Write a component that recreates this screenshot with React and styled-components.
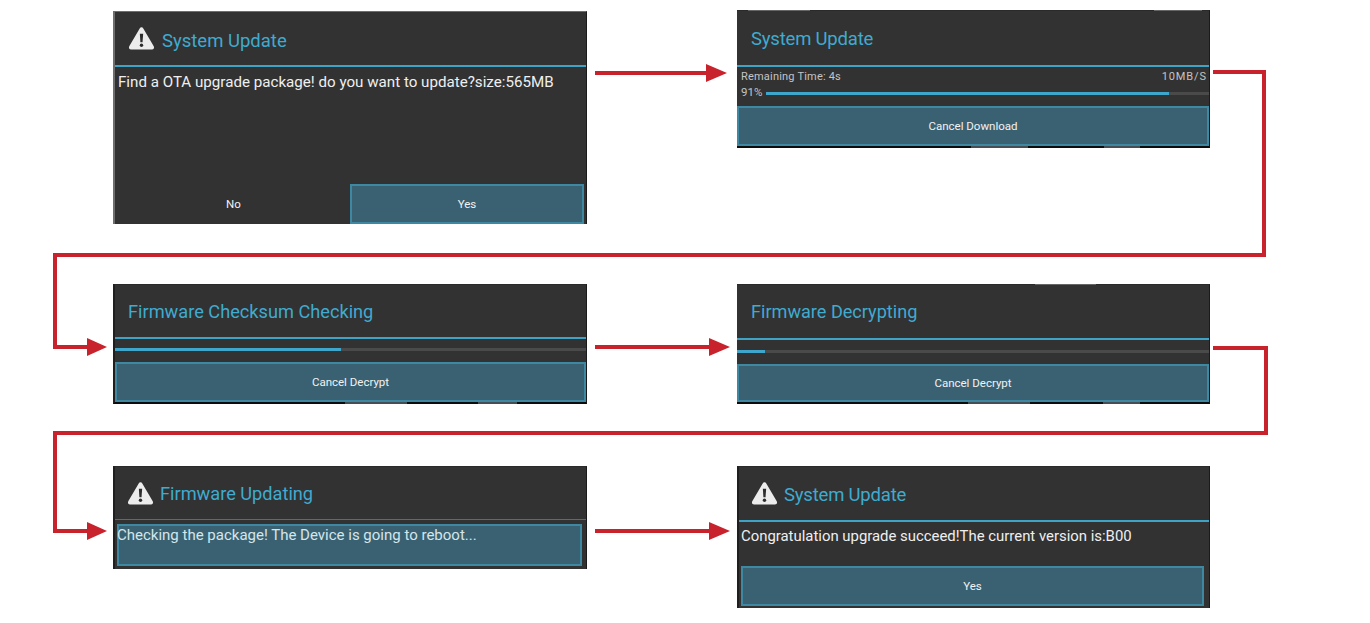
import React from 'react';
import styled, { createGlobalStyle } from 'styled-components';

const GlobalStyle = createGlobalStyle`
  html, body {
    margin: 0;
    background: #fff;
    font-family: Roboto, 'Liberation Sans', sans-serif;
  }
`;

const Page = styled.div`
  position: relative;
  width: 1370px;
  height: 623px;
  overflow: hidden;
  background: #fff;
`;

const Flow = styled.div`
  display: grid;
  grid-template-columns: 474px 473px;
  column-gap: 150px;
  row-gap: 60px;
  padding: 10px 0 0 113px;
  align-items: start;
`;

const Screen = styled.section`
  position: relative;
  display: flex;
  flex-direction: column;
  box-sizing: border-box;
  height: ${(p) => p.$height}px;
  margin-top: ${(p) => p.$top || 0}px;
  background: #323232;
  color: #eee;
  border-left: ${(p) => (p.$flush ? 0 : 2)}px solid ${(p) => p.$edge || '#1f1f1f'};
  border-right: 1px solid #1a1a1a;
  border-top: 1px solid ${(p) => p.$edge || '#2a2a2a'};
  border-bottom: ${(p) => (p.$footer ? '2px solid #0c0c0c' : '0')};
`;

const TitleBar = styled.header`
  display: flex;
  align-items: center;
  gap: ${(p) => p.$gap || 7}px;
  box-sizing: border-box;
  height: ${(p) => p.$height}px;
  padding-left: ${(p) => p.$inset}px;
  border-bottom: ${(p) => p.$rule || 2}px solid ${(p) => p.$ruleColor || '#3ea3c4'};
  flex-shrink: 0;
`;

const Title = styled.h2`
  margin: ${(p) => p.$drop || 0}px 0 0 0;
  font-size: ${(p) => p.$size || 18.5}px;
  font-weight: 400;
  color: #3fabd0;
  letter-spacing: ${(p) => p.$tight || 0}px;
`;

const Message = styled.p`
  margin: 0;
  padding: ${(p) => p.$pad || '6px 0 0 3px'};
  font-size: ${(p) => p.$size || 15.15}px;
  line-height: 18px;
  color: #efefef;
`;

const Spacer = styled.div`
  flex: 1;
`;

const ButtonRow = styled.div`
  display: flex;
  gap: 1px;
  padding-right: 2px;
`;

const DialogButton = styled.button`
  flex: ${(p) => (p.$fixed ? 'none' : 1)};
  box-sizing: border-box;
  height: ${(p) => p.$height || 40}px;
  margin: ${(p) => p.$margin || 0};
  padding: 0;
  text-indent: ${(p) => (p.$plain ? 3 : 0)}px;
  font-family: inherit;
  font-size: 11.5px;
  color: #f2f2f2;
  background: ${(p) => (p.$plain ? 'transparent' : '#3a6171')};
  border: ${(p) => (p.$plain ? '2px solid transparent' : '2px solid #3f88a2')};
  border-radius: 0;
`;

const StatusRow = styled.div`
  display: flex;
  justify-content: space-between;
  padding: 3px 2px 0 4px;
  font-size: 11px;
  line-height: 13px;
  color: #c4c4c4;
  letter-spacing: 0.2px;
`;

const Speed = styled.span`
  letter-spacing: 0.9px;
`;

const ProgressRow = styled.div`
  display: flex;
  align-items: center;
  gap: 4px;
  box-sizing: border-box;
  height: ${(p) => p.$height}px;
  padding: ${(p) => p.$pad || 0};
`;

const ProgressLabel = styled.span`
  padding: 0 0 3px 4px;
  font-size: 11.5px;
  color: #c4c4c4;
`;

const Track = styled.div`
  flex: 1;
  height: 3px;
  background: #4a4a4a;
`;

const Fill = styled.div`
  height: 100%;
  background: #3fa6cb;
`;

const Pending = styled.div`
  box-sizing: border-box;
  height: 42px;
  margin: 4px 4px 0 2px;
  padding-top: 2px;
  background: #3a6171;
  box-shadow: inset 0 0 0 2px #3f88a2;
  color: #d4e6ec;
  font-size: 15px;
  line-height: 18px;
`;

const EdgeBit = styled.span`
  position: absolute;
  ${(p) => (p.$atTop ? 'top: -1px; height: 1px; background: #666;' : 'bottom: -2px; height: 2px; background: #444f55;')}
  left: ${(p) => p.$left}px;
  width: ${(p) => p.$width}px;
`;

const Connectors = styled.svg`
  position: absolute;
  inset: 0;
  pointer-events: none;
`;

function WarningIcon({ size = 27 }) {
  return (
    <svg width={size} height={size * 0.9} viewBox="0 0 30 27" aria-hidden="true">
      <path
        d="M15 1.5c-.9 0-1.6.5-2 1.2L1.4 22.6c-1 1.8.1 3.6 2 3.6h23.2c1.9 0 3-1.8 2-3.6L17 2.7c-.4-.7-1.1-1.2-2-1.2z"
        fill="#ececec"
      />
      <path d="M13.2 8.5h3.6l-.6 9.5h-2.4z" fill="#2c2c2c" />
      <circle cx="15" cy="21.3" r="1.9" fill="#2c2c2c" />
    </svg>
  );
}

function Arrow({ x1, x2, y }) {
  return (
    <g>
      <rect x={x1} y={y - 2} width={x2 - x1 - 18} height="4" fill="#c8232c" />
      <path d={`M${x2} ${y}L${x2 - 21} ${y - 9}V${y + 9}z`} fill="#c8232c" />
    </g>
  );
}

export default function App() {
  return (
    <Page>
      <GlobalStyle />
      <Flow>
        <Screen $height={213} $top={1} $edge="#6e6e6e">
          <TitleBar $height={55} $inset={13}>
            <WarningIcon />
            <Title $drop={4}>System Update</Title>
          </TitleBar>
          <Message>Find a OTA upgrade package! do you want to update?size:565MB</Message>
          <Spacer />
          <ButtonRow>
            <DialogButton $plain>No</DialogButton>
            <DialogButton>Yes</DialogButton>
          </ButtonRow>
        </Screen>

        <Screen $height={138} $footer $flush>
          <TitleBar $height={56} $inset={14}>
            <Title $drop={2} $tight={-0.2}>System Update</Title>
          </TitleBar>
          <StatusRow>
            <span>Remaining Time: 4s</span>
            <Speed>10MB/S</Speed>
          </StatusRow>
          <ProgressRow $height={19} $pad="2px 0 0 0">
            <ProgressLabel>91%</ProgressLabel>
            <Track>
              <Fill style={{ width: '91%' }} />
            </Track>
          </ProgressRow>
          <DialogButton $fixed $height={40} $margin="4px 0 0 0">Cancel Download</DialogButton>
          <EdgeBit $atTop $left={11} $width={62} />
          <EdgeBit $atTop $left={417} $width={48} />
          <EdgeBit $left={234} $width={57} />
          <EdgeBit $left={367} $width={36} />
        </Screen>

        <Screen $height={120} $footer>
          <TitleBar $height={54} $inset={13}>
            <Title $size={18.2}>Firmware Checksum Checking</Title>
          </TitleBar>
          <ProgressRow $height={23} $pad="0 0 3px 0">
            <Track>
              <Fill style={{ width: '48%' }} />
            </Track>
          </ProgressRow>
          <DialogButton $fixed $height={40}>Cancel Decrypt</DialogButton>
          <EdgeBit $left={230} $width={62} />
          <EdgeBit $left={363} $width={39} />
        </Screen>

        <Screen $height={120} $footer $flush>
          <TitleBar $height={55} $inset={14}>
            <Title $size={18.1}>Firmware Decrypting</Title>
          </TitleBar>
          <ProgressRow $height={24} $pad="0 0 2px 0">
            <Track>
              <Fill style={{ width: '6%' }} />
            </Track>
          </ProgressRow>
          <DialogButton $fixed $height={38}>Cancel Decrypt</DialogButton>
          <EdgeBit $atTop $left={298} $width={61} />
          <EdgeBit $left={231} $width={62} />
          <EdgeBit $left={366} $width={37} />
        </Screen>

        <Screen $height={103} $top={2}>
          <TitleBar $height={53} $inset={12} $gap={6} $rule={1} $ruleColor="#37788e">
            <WarningIcon />
            <Title $size={18.2}>Firmware Updating</Title>
          </TitleBar>
          <Pending>Checking the package! The Device is going to reboot...</Pending>
        </Screen>

        <Screen $height={142} $top={2}>
          <TitleBar $height={55} $inset={12} $gap={6}>
            <WarningIcon />
            <Title $drop={2} $tight={-0.2}>System Update</Title>
          </TitleBar>
          <Message $pad="5px 0 0 2px" $size={14.9}>
            Congratulation upgrade succeed!The current version is:B00
          </Message>
          <Spacer />
          <DialogButton $fixed $height={40} $margin="0 5px 2px 2px">
            Yes
          </DialogButton>
        </Screen>
      </Flow>

      <Connectors width="1370" height="623" viewBox="0 0 1370 623" aria-hidden="true">
        <Arrow x1={595} x2={727} y={73} />
        <Arrow x1={595} x2={730} y={347} />
        <Arrow x1={595} x2={730} y={531} />
        <path d="M1213 72H1264V255H55V347H90" fill="none" stroke="#c8232c" strokeWidth="4" />
        <path d="M87 338L107 347L87 356z" fill="#c8232c" />
        <path d="M1213 348H1266V433H55V531H90" fill="none" stroke="#c8232c" strokeWidth="4" />
        <path d="M87 522L107 531L87 540z" fill="#c8232c" />
      </Connectors>
    </Page>
  );
}
